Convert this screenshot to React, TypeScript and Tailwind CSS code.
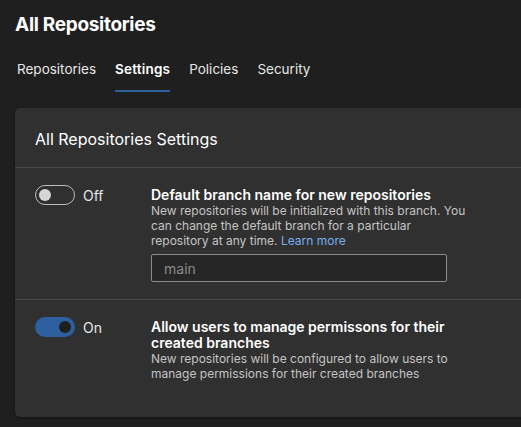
function Toggle({ on }: { on: boolean }) {
  if (on) {
    return (
      <div className="w-10 h-5 rounded-full bg-[#2e5f9e] flex items-center justify-end px-[4px] shrink-0">
        <div className="w-3 h-3 rounded-full bg-[#1f1f1f]" />
      </div>
    );
  }
  return (
    <div className="w-10 h-5 rounded-full border border-[#bdbdbd] flex items-center px-[3px] shrink-0">
      <div className="w-3 h-3 rounded-full bg-[#d6d6d6]" />
    </div>
  );
}

function SettingRow({
  on,
  title,
  children,
  last,
}: {
  on: boolean;
  title: React.ReactNode;
  children: React.ReactNode;
  last?: boolean;
}) {
  return (
    <div className={`flex px-5 pt-[17px] ${last ? "pb-[36px]" : "pb-[17px] border-b border-[#474747]"}`}>
      <div className="w-[116px] shrink-0 flex items-center gap-2 h-5 self-start">
        <Toggle on={on} />
        <span className="text-[14px] text-[#e8e8e8]">{on ? "On" : "Off"}</span>
      </div>
      <div className="w-[316px]">
        <div className="text-[14px] leading-[16px] font-semibold text-white pt-[2px]">{title}</div>
        {children}
      </div>
    </div>
  );
}

export default function App() {
  return (
    <div
      className="min-h-screen bg-[#1f1f1f] text-white overflow-hidden"
      style={{ fontFamily: "Inter, 'Noto Sans', sans-serif" }}
    >
      <div className="px-[15px] pt-[13px]">
        <h1 className="text-[19px] font-bold tracking-[-0.3px] leading-6">All Repositories</h1>
      </div>

      {/* tabs */}
      <div className="flex gap-[19px] px-[17px] mt-[22px] text-[13.5px]">
        <div className="pb-[13px] text-[#e6e6e6]">Repositories</div>
        <div className="pb-[11px] font-semibold text-white border-b-[2px] border-[#2e5f9e] tracking-[0.2px]">Settings</div>
        <div className="pb-[13px] text-[#e6e6e6]">Policies</div>
        <div className="pb-[13px] text-[#e6e6e6]">Security</div>
      </div>

      <div className="ml-[15px] mr-[-12px] mt-[16px] rounded-[5px] bg-[#303030] shadow-[0_1px_3px_rgba(0,0,0,0.5)]">
        <div className="h-[60px] px-5 flex items-center border-b border-[#474747]">
          <h2 className="text-[16px] text-white pt-[2px]">All Repositories Settings</h2>
        </div>

        <SettingRow on={false} title="Default branch name for new repositories">
          <p className="text-[12px] leading-[15px] text-[#c4c4c4]">
            New repositories will be initialized with this branch. You can change the default branch for a particular
            repository at any time. <span className="text-[#7aaef0]">Learn more</span>
          </p>
          <div className="mt-[6px] w-[296px] h-[28px] bg-[#262626] border border-[#8c8c8c] rounded-[2px] flex items-center px-3 text-[14px] text-[#8a8a8a]">
            main
          </div>
        </SettingRow>

        <SettingRow on title="Allow users to manage permissons for their created branches" last>
          <p className="text-[12px] leading-[15px] text-[#c4c4c4]">
            New repositories will be configured to allow users to manage permissions for their created branches
          </p>
        </SettingRow>
      </div>
    </div>
  );
}
